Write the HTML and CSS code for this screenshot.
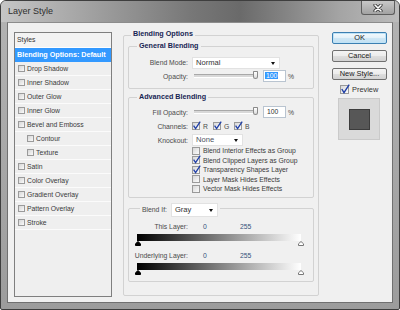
FILE: index.html
```html
<!DOCTYPE html>
<html lang="en">
<head>
    <meta charset="UTF-8">
    <title>Layer Style</title>
    <link rel="stylesheet" href="styles.css">
</head>
<body>
    <div class="window">
        <div class="titlebar">
            <span class="title">Layer Style</span>
            <span class="close-btn">
                <svg width="10" height="8" viewBox="0 0 10 8">
                    <path d="M2 1 L8 7 M8 1 L2 7" stroke="#3a3a3a" stroke-width="3.2" stroke-linecap="round"/>
                    <path d="M2 1 L8 7 M8 1 L2 7" stroke="#ffffff" stroke-width="1.6" stroke-linecap="round"/>
                </svg>
            </span>
        </div>

        <div class="client">
            <!-- styles list -->
            <div class="style-list">
                <div class="list-head">Styles</div>
                <div class="list-item selected">Blending Options: Default</div>
                <div class="list-item"><span class="box"></span>Drop Shadow</div>
                <div class="list-item"><span class="box"></span>Inner Shadow</div>
                <div class="list-item"><span class="box"></span>Outer Glow</div>
                <div class="list-item"><span class="box"></span>Inner Glow</div>
                <div class="list-item"><span class="box"></span>Bevel and Emboss</div>
                <div class="list-item sub"><span class="box"></span>Contour</div>
                <div class="list-item sub"><span class="box"></span>Texture</div>
                <div class="list-item"><span class="box"></span>Satin</div>
                <div class="list-item"><span class="box"></span>Color Overlay</div>
                <div class="list-item"><span class="box"></span>Gradient Overlay</div>
                <div class="list-item"><span class="box"></span>Pattern Overlay</div>
                <div class="list-item"><span class="box"></span>Stroke</div>
            </div>

            <!-- blending options -->
            <div class="group main-group">
                <div class="group-title">Blending Options</div>

                <div class="group general">
                    <div class="group-title">General Blending</div>
                    <div class="row row-select">
                        <span class="lbl">Blend Mode:</span>
                        <div class="select mode-select">Normal<span class="arrow"></span></div>
                    </div>
                    <div class="row row-slider">
                        <span class="lbl">Opacity:</span>
                        <div class="slider"><span class="thumb"></span></div>
                        <div class="num-input"><span class="hilite">100</span></div>
                        <span class="pct">%</span>
                    </div>
                </div>

                <div class="group advanced">
                    <div class="group-title">Advanced Blending</div>
                    <div class="row row-slider">
                        <span class="lbl">Fill Opacity:</span>
                        <div class="slider"><span class="thumb"></span></div>
                        <div class="num-input">100</div>
                        <span class="pct">%</span>
                    </div>
                    <div class="row row-chan">
                        <span class="lbl">Channels:</span>
                        <span class="chan"><span class="cbox checked"><svg width="9" height="9" viewBox="0 0 9 9"><path d="M1.6 4.6 L3.6 7.6 L8.2 0.6" fill="none" stroke="#2140a8" stroke-width="1.3"/></svg></span>R</span>
                        <span class="chan"><span class="cbox checked"><svg width="9" height="9" viewBox="0 0 9 9"><path d="M1.6 4.6 L3.6 7.6 L8.2 0.6" fill="none" stroke="#2140a8" stroke-width="1.3"/></svg></span>G</span>
                        <span class="chan"><span class="cbox checked"><svg width="9" height="9" viewBox="0 0 9 9"><path d="M1.6 4.6 L3.6 7.6 L8.2 0.6" fill="none" stroke="#2140a8" stroke-width="1.3"/></svg></span>B</span>
                    </div>
                    <div class="row row-select">
                        <span class="lbl">Knockout:</span>
                        <div class="select knock-select">None<span class="arrow"></span></div>
                    </div>
                    <div class="check-list">
                        <div class="check-row"><span class="cbox"></span>Blend Interior Effects as Group</div>
                        <div class="check-row"><span class="cbox checked"><svg width="9" height="9" viewBox="0 0 9 9"><path d="M1.6 4.6 L3.6 7.6 L8.2 0.6" fill="none" stroke="#2140a8" stroke-width="1.3"/></svg></span>Blend Clipped Layers as Group</div>
                        <div class="check-row"><span class="cbox checked"><svg width="9" height="9" viewBox="0 0 9 9"><path d="M1.6 4.6 L3.6 7.6 L8.2 0.6" fill="none" stroke="#2140a8" stroke-width="1.3"/></svg></span>Transparency Shapes Layer</div>
                        <div class="check-row"><span class="cbox"></span>Layer Mask Hides Effects</div>
                        <div class="check-row"><span class="cbox"></span>Vector Mask Hides Effects</div>
                    </div>
                </div>

                <div class="group blend-if">
                    <div class="blend-if-title">
                        <span>Blend If:</span>
                        <div class="select gray-select">Gray<span class="arrow"></span></div>
                    </div>
                    <div class="range-row">
                        <span class="lbl">This Layer:</span>
                        <span class="val-lo">0</span>
                        <span class="val-hi">255</span>
                    </div>
                    <div class="ramp"></div>
                    <div class="ramp-thumbs">
                        <svg class="rthumb left" width="6" height="5" viewBox="0 0 6 5"><path d="M3 0.5 L5.5 2.8 L5.5 4.5 L0.5 4.5 L0.5 2.8 Z" fill="#000" stroke="#000"/></svg>
                        <svg class="rthumb right" width="6" height="5" viewBox="0 0 6 5"><path d="M3 0.5 L5.5 2.8 L5.5 4.5 L0.5 4.5 L0.5 2.8 Z" fill="#fff" stroke="#777"/></svg>
                    </div>
                    <div class="range-row second">
                        <span class="lbl">Underlying Layer:</span>
                        <span class="val-lo">0</span>
                        <span class="val-hi">255</span>
                    </div>
                    <div class="ramp"></div>
                    <div class="ramp-thumbs">
                        <svg class="rthumb left" width="6" height="5" viewBox="0 0 6 5"><path d="M3 0.5 L5.5 2.8 L5.5 4.5 L0.5 4.5 L0.5 2.8 Z" fill="#000" stroke="#000"/></svg>
                        <svg class="rthumb right" width="6" height="5" viewBox="0 0 6 5"><path d="M3 0.5 L5.5 2.8 L5.5 4.5 L0.5 4.5 L0.5 2.8 Z" fill="#fff" stroke="#777"/></svg>
                    </div>
                </div>
            </div>

            <!-- buttons -->
            <div class="side">
                <div class="btn default">OK</div>
                <div class="btn">Cancel</div>
                <div class="btn">New Style...</div>
                <div class="preview-row">
                    <span class="cbox big checked"><svg width="10" height="10" viewBox="0 0 10 10"><path d="M1.8 5 L4 8.6 L9.2 0.6" fill="none" stroke="#2140a8" stroke-width="1.4"/></svg></span>Preview
                </div>
                <div class="swatch"><span class="swatch-inner"></span></div>
            </div>
        </div>
    </div>
</body>
</html>
```

FILE: styles.css
```css
body {
    margin: 0;
    background: #ffffff;
    font-family: "Liberation Sans", Arial, sans-serif;
    font-size: 6.8px;
    color: #333;
}

.window {
    width: 400px;
    height: 310px;
    box-sizing: border-box;
    border: 1px solid #3e3e3e;
    border-radius: 6px 6px 2px 2px;
    background: linear-gradient(to bottom, #b4b4b4, #9c9c9c);
    padding-bottom: 6px;
    overflow: hidden;
}

.titlebar {
    height: 21px;
    display: flex;
    justify-content: space-between;
    align-items: flex-start;
    padding-left: 7px;
    background: linear-gradient(to right, #c6c6c6 0%, #b2b2b2 12%, #959595 30%, #777 48%, #6a6a6a 60%, #858585 72%, #a4a4a4 85%, #bcbcbc 100%);
}

.title {
    font-size: 9px;
    line-height: 20px;
    color: #2e2e2e;
}

.close-btn {
    width: 34px;
    height: 14px;
    box-sizing: border-box;
    margin-right: 4px;
    border: 1px solid #5e5e5e;
    border-top: none;
    border-radius: 0 0 3px 3px;
    background: linear-gradient(to bottom, #c8c8c8, #a2a2a2);
    display: flex;
    align-items: center;
    justify-content: center;
}

.client {
    margin: 0 6px;
    height: 281px;
    box-sizing: border-box;
    border: 1px solid #707070;
    border-top-color: #8c8c8c;
    background: #f0f0f0;
    display: flex;
    align-items: flex-start;
    padding: 9px 5px 0 6px;
}

/* styles list */
.style-list {
    width: 98px;
    height: 265px;
    box-sizing: border-box;
    border: 1px solid #7f7f7f;
    background: #efefef;
    flex-shrink: 0;
}

.list-head {
    height: 14px;
    line-height: 14px;
    padding-left: 2px;
    border-bottom: 1px solid #ffffff;
    background: #f3f3f3;
}

.list-item {
    height: 13px;
    border-bottom: 1px solid #fbfbfb;
    display: flex;
    align-items: center;
    padding-left: 3px;
    color: #3a3a3a;
}

.list-item.selected {
    background: #3399ff;
    color: #ffffff;
    font-weight: bold;
    font-size: 7.2px;
    padding-left: 2px;
    border-bottom-color: #3399ff;
}

.list-item.sub {
    padding-left: 12px;
}

.box {
    width: 7px;
    height: 7px;
    box-sizing: border-box;
    border: 1px solid #9a9a9a;
    background: linear-gradient(135deg, #d6d6d6, #fafafa);
    margin-right: 2px;
}

/* group boxes */
.group {
    position: relative;
    border: 1px solid #d2d2d2;
    border-radius: 2px;
}

.group-title {
    position: absolute;
    left: 7px;
    top: -6px;
    padding: 0 2px;
    line-height: 10px;
    background: #f0f0f0;
    font-weight: bold;
    font-size: 7.2px;
    color: #172553;
}

.main-group {
    width: 196px;
    height: 261px;
    box-sizing: border-box;
    margin-left: 11px;
    margin-top: 3px;
    padding: 10px 4px 0 4px;
    flex-shrink: 0;
}

.main-group > .group-title {
    top: -7px;
}

.general {
    padding: 9px 0 6px 0;
}

.general .group-title,
.advanced .group-title {
    left: 8px;
}

.advanced {
    margin-top: 8px;
    padding: 8px 0 3px 0;
}

.row {
    display: flex;
    align-items: center;
}

.row-select {
    height: 13px;
}

.row-slider {
    height: 12px;
    margin-top: 1px;
}

.advanced .row-slider {
    margin-top: 0;
}

.row-chan {
    height: 12px;
    margin-top: 2px;
}

.advanced .row-select {
    height: 12px;
    margin-top: 2px;
}

.lbl {
    width: 59px;
    text-align: right;
    margin-right: 4px;
    color: #4a4a4a;
    white-space: nowrap;
    flex-shrink: 0;
}

.select {
    position: relative;
    height: 12px;
    box-sizing: border-box;
    background: #ffffff;
    border: 1px solid #e2e2e2;
    padding-left: 3px;
    line-height: 10px;
    font-size: 7.6px;
    color: #333;
}

.mode-select {
    width: 88px;
}

.knock-select {
    width: 51px;
    color: #4a5060;
}

.arrow {
    position: absolute;
    right: 4px;
    top: 4px;
    width: 0;
    height: 0;
    border-top: 3px solid #111;
    border-left: 2.5px solid transparent;
    border-right: 2.5px solid transparent;
}

.slider {
    position: relative;
    width: 64px;
    height: 2px;
    margin-left: 2px;
    background: #d8d8d8;
    border-top: 1px solid #a8a8a8;
    border-bottom: 1px solid #ffffff;
}

.thumb {
    position: absolute;
    right: 0;
    top: -4px;
    width: 5px;
    height: 8px;
    box-sizing: border-box;
    border: 1px solid #8a8a8a;
    border-radius: 1px 1px 3px 3px;
    background: linear-gradient(to bottom, #ffffff, #dcdcdc);
}

.num-input {
    width: 23px;
    height: 12px;
    box-sizing: border-box;
    margin-left: 5px;
    background: #ffffff;
    border: 1px solid #b9c4d0;
    padding-left: 3px;
    line-height: 10px;
    color: #333;
}

.hilite {
    background: #3399ff;
    color: #ffffff;
    padding: 0 1px;
    margin-left: -2px;
}

.pct {
    margin-left: 2px;
    color: #4a4a4a;
}

.chan {
    display: flex;
    align-items: center;
    width: 21px;
    color: #4a4a4a;
}

.cbox {
    width: 8px;
    height: 8px;
    box-sizing: border-box;
    border: 1px solid #9a9a9a;
    background: linear-gradient(135deg, #d8d8d8, #fbfbfb);
    margin-right: 3px;
    position: relative;
    flex-shrink: 0;
}

.cbox svg {
    position: absolute;
    left: -1px;
    top: -2px;
}

.check-list {
    padding-left: 63px;
}

.check-row {
    height: 9.5px;
    display: flex;
    align-items: center;
    color: #3a3a3a;
    white-space: nowrap;
}

/* blend if */
.blend-if {
    margin-top: 10px;
    padding: 13px 0 6px 0;
}

.blend-if-title {
    position: absolute;
    left: 11px;
    top: -6px;
    padding: 0 2px;
    background: #f0f0f0;
    display: flex;
    align-items: center;
    color: #4a4a4a;
}

.gray-select {
    width: 47px;
    height: 14px;
    line-height: 12px;
    margin-left: 4px;
}

.gray-select .arrow {
    top: 5px;
}

.range-row {
    height: 10px;
    display: flex;
    align-items: center;
}

.range-row.second {
    margin-top: 5px;
}

.val-lo {
    width: 37px;
    margin-left: 11px;
    color: #34507a;
}

.val-hi {
    color: #34507a;
}

.ramp {
    margin: 2px 0 0 8px;
    width: 164px;
    height: 7px;
    background: linear-gradient(to right, #000000, #ffffff);
}

.ramp-thumbs {
    position: relative;
    margin-left: 8px;
    width: 164px;
    height: 5px;
}

.rthumb {
    position: absolute;
    top: 0;
}

.rthumb.left {
    left: -2px;
}

.rthumb.right {
    right: -3px;
}

/* buttons */
.side {
    width: 55px;
    margin-left: 13px;
    display: flex;
    flex-direction: column;
    flex-shrink: 0;
}

.btn {
    height: 12px;
    box-sizing: border-box;
    border: 1px solid #707070;
    border-radius: 2px;
    background: linear-gradient(to bottom, #f4f4f4 0%, #ececec 50%, #dedede 51%, #d2d2d2 100%);
    text-align: center;
    line-height: 10px;
    font-size: 7.4px;
    color: #1a1a1a;
    margin-top: 6px;
}

.btn.default {
    margin-top: 0;
    border-color: #3c7fb1;
    background: linear-gradient(to bottom, #f4fafd 0%, #e3f1f9 50%, #cfe7f5 51%, #c2e0f2 100%);
    box-shadow: inset 0 0 0 1px #bfe3f7;
}

.preview-row {
    height: 10px;
    margin-top: 4px;
    padding-left: 8px;
    display: flex;
    align-items: center;
    font-size: 7.4px;
    color: #333;
}

.cbox.big {
    width: 9px;
    height: 9px;
}

.swatch {
    width: 42px;
    height: 42px;
    box-sizing: border-box;
    margin: 4px 0 0 6px;
    border: 1px solid #cacaca;
    background: #dadada;
    display: flex;
    align-items: center;
    justify-content: center;
}

.swatch-inner {
    width: 21px;
    height: 21px;
    box-sizing: border-box;
    border: 1px solid #3c3c3c;
    background: #575757;
}
```
